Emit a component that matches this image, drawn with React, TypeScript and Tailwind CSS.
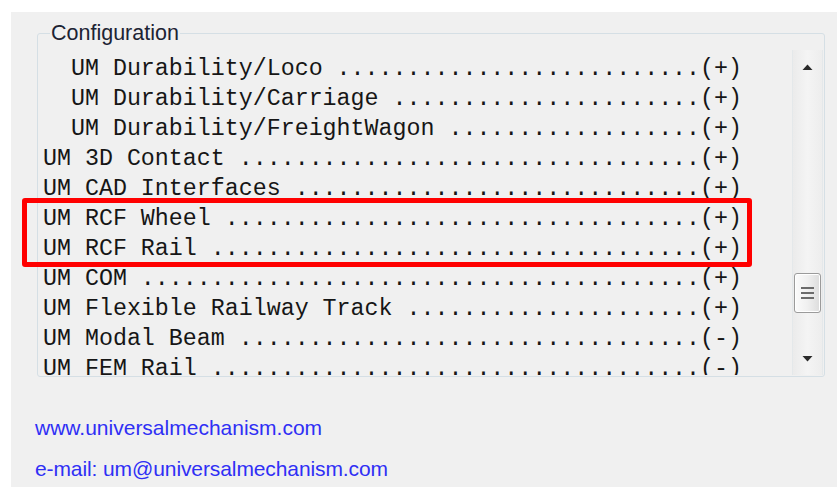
import React from "react";

type Row = { name: string; mark: "+" | "-" };

const rows: Row[] = [
  { name: "  UM Durability/Loco", mark: "+" },
  { name: "  UM Durability/Carriage", mark: "+" },
  { name: "  UM Durability/FreightWagon", mark: "+" },
  { name: "UM 3D Contact", mark: "+" },
  { name: "UM CAD Interfaces", mark: "+" },
  { name: "UM RCF Wheel", mark: "+" },
  { name: "UM RCF Rail", mark: "+" },
  { name: "UM COM", mark: "+" },
  { name: "UM Flexible Railway Track", mark: "+" },
  { name: "UM Modal Beam", mark: "-" },
  { name: "UM FEM Rail", mark: "-" },
];

// Pad each module name with a dotted leader up to a fixed column.
const LEADER_COL = 47;
function line(r: Row) {
  const head = r.name + " ";
  const dots = ".".repeat(Math.max(0, LEADER_COL - head.length));
  return `${head}${dots}(${r.mark})`;
}

function ScrollBar() {
  return (
    <div className="flex w-[31px] shrink-0 flex-col border-l border-r border-[#e4e8ea] bg-gradient-to-r from-[#ebebeb] via-[#f4f4f4] to-[#ededed]">
      <div className="flex h-[34px] items-center justify-center">
        <svg width="11" height="7" viewBox="0 0 11 7">
          <path d="M5.5 0.5 L10.5 6 L0.5 6 Z" fill="#2a2a2a" />
        </svg>
      </div>
      <div className="h-[189px]" />
      <div className="mx-[1px] flex h-[40px] flex-col items-center justify-center gap-[3px] rounded-[3px] border border-[#9b9b9b] bg-gradient-to-r from-[#fbfbfb] via-[#f0f0f0] to-[#dcdcdc] shadow-[inset_0_0_0_1px_#ffffff]">
        <div className="h-[2px] w-[13px] bg-[#6b6b6b]" />
        <div className="h-[2px] w-[13px] bg-[#6b6b6b]" />
        <div className="h-[2px] w-[13px] bg-[#6b6b6b]" />
      </div>
      <div className="flex-1" />
      <div className="flex h-[33px] items-center justify-center">
        <svg width="11" height="7" viewBox="0 0 11 7">
          <path d="M0.5 1 L10.5 1 L5.5 6.5 Z" fill="#2a2a2a" />
        </svg>
      </div>
    </div>
  );
}

export default function App() {
  return (
    <div className="relative h-[487px] w-[837px] overflow-hidden bg-white pl-[11px] pt-[12px]">
      <div className="flex h-full w-full flex-col bg-[#f0f0f0]">
        <fieldset className="ml-[26px] mt-[10px] w-[788px] rounded-[3px] border border-[#d5dfe5] pb-[1px] pr-[1px]">
          <legend
            className="ml-[12px] px-[1px] text-[21.5px] leading-[22px] text-[#1c2333]"
            style={{ fontFamily: '"Liberation Sans", Arial, sans-serif' }}
          >
            Configuration
          </legend>
          <div className="mt-[6px] flex h-[325px]">
            <div
              className="flex-1 overflow-hidden pl-[5px] pt-[4px] text-[23.3px] leading-[30px] text-[#161616]"
              style={{ fontFamily: '"Liberation Mono", "Courier New", monospace' }}
            >
              {rows.map((r) => (
                <div key={r.name} className="whitespace-pre">
                  {line(r)}
                </div>
              ))}
            </div>
            <ScrollBar />
          </div>
        </fieldset>

        <div
          className="ml-[24px] mt-[39px] flex flex-col gap-[17px] text-[21px] leading-[24px] text-[#2f2ff5]"
          style={{ fontFamily: '"Liberation Sans", Arial, sans-serif' }}
        >
          <span>www.universalmechanism.com</span>
          <span className="tracking-[-0.1px]">e-mail: um@universalmechanism.com</span>
        </div>
      </div>

      {/* highlight frame around the RCF modules */}
      <div className="absolute left-[22px] top-[198px] h-[69px] w-[730px] rounded-[3px] border-[5px] border-[#ff0000]" />
    </div>
  );
}
